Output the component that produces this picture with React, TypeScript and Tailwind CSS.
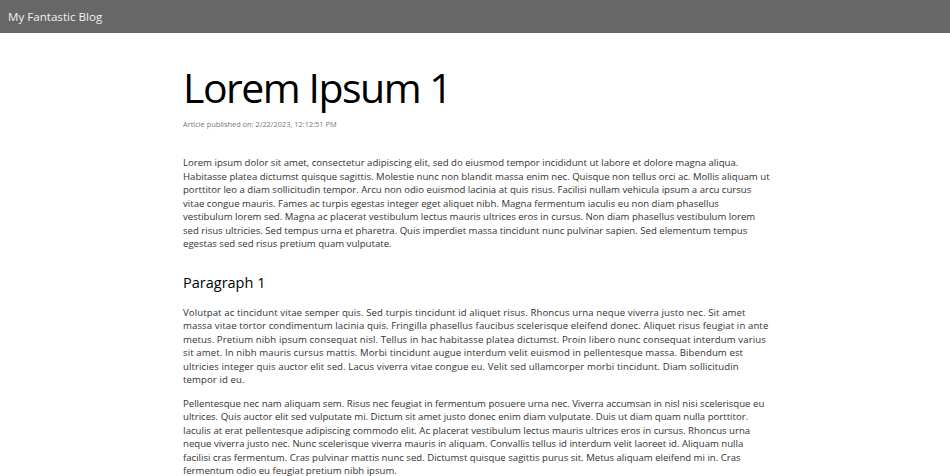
const paragraphs = [
  {
    text: "Volutpat ac tincidunt vitae semper quis. Sed turpis tincidunt id aliquet risus. Rhoncus urna neque viverra justo nec. Sit amet massa vitae tortor condimentum lacinia quis. Fringilla phasellus faucibus scelerisque eleifend donec. Aliquet risus feugiat in ante metus. Pretium nibh ipsum consequat nisl. Tellus in hac habitasse platea dictumst. Proin libero nunc consequat interdum varius sit amet. In nibh mauris cursus mattis. Morbi tincidunt augue interdum velit euismod in pellentesque massa. Bibendum est ultricies integer quis auctor elit sed. Lacus viverra vitae congue eu. Velit sed ullamcorper morbi tincidunt. Diam sollicitudin tempor id eu.",
    cls: "tracking-[0.1px]",
  },
  {
    text: "Pellentesque nec nam aliquam sem. Risus nec feugiat in fermentum posuere urna nec. Viverra accumsan in nisl nisi scelerisque eu ultrices. Quis auctor elit sed vulputate mi. Dictum sit amet justo donec enim diam vulputate. Duis ut diam quam nulla porttitor. Iaculis at erat pellentesque adipiscing commodo elit. Ac placerat vestibulum lectus mauris ultrices eros in cursus. Rhoncus urna neque viverra justo nec. Nunc scelerisque viverra mauris in aliquam. Convallis tellus id interdum velit laoreet id. Aliquam nulla facilisi cras fermentum. Cras pulvinar mattis nunc sed. Dictumst quisque sagittis purus sit. Metus aliquam eleifend mi in. Cras fermentum odio eu feugiat pretium nibh ipsum.",
    cls: "tracking-normal",
  },
];

const intro =
  "Lorem ipsum dolor sit amet, consectetur adipiscing elit, sed do eiusmod tempor incididunt ut labore et dolore magna aliqua. Habitasse platea dictumst quisque sagittis. Molestie nunc non blandit massa enim nec. Quisque non tellus orci ac. Mollis aliquam ut porttitor leo a diam sollicitudin tempor. Arcu non odio euismod lacinia at quis risus. Facilisi nullam vehicula ipsum a arcu cursus vitae congue mauris. Fames ac turpis egestas integer eget aliquet nibh. Magna fermentum iaculis eu non diam phasellus vestibulum lorem sed. Magna ac placerat vestibulum lectus mauris ultrices eros in cursus. Non diam phasellus vestibulum lorem sed risus ultricies. Sed tempus urna et pharetra. Quis imperdiet massa tincidunt nunc pulvinar sapien. Sed elementum tempus egestas sed sed risus pretium quam vulputate.";

export default function App() {
  return (
    <div className="min-h-screen bg-white font-['Open_Sans',sans-serif]">
      {/* Top bar */}
      <header className="h-[33px] bg-[#676767] flex items-center px-2">
        <span className="text-[11.6px] text-[#f2f2f2]">My Fantastic Blog</span>
      </header>

      {/* Article */}
      <main className="mx-auto w-[590px] pl-[3px] pt-[26px]">
        <h1 className="text-[41px] leading-[56px] tracking-[-1.5px] text-black">Lorem Ipsum 1</h1>
        <p className="mt-[4px] text-[7.4px] text-[#777]">Article published on: 2/22/2023, 12:12:51 PM</p>

        <p className="mt-[26px] text-[9.6px] leading-[13.5px] text-[#333]">{intro}</p>

        <h2 className="mt-[21px] mb-[12px] text-[14.5px] leading-[22px] text-black">Paragraph 1</h2>

        {paragraphs.map((p, i) => (
          <p key={i} className={`mb-[10px] text-[9.6px] leading-[13.5px] text-[#333] ${p.cls}`}>
            {p.text}
          </p>
        ))}
      </main>
    </div>
  );
}
